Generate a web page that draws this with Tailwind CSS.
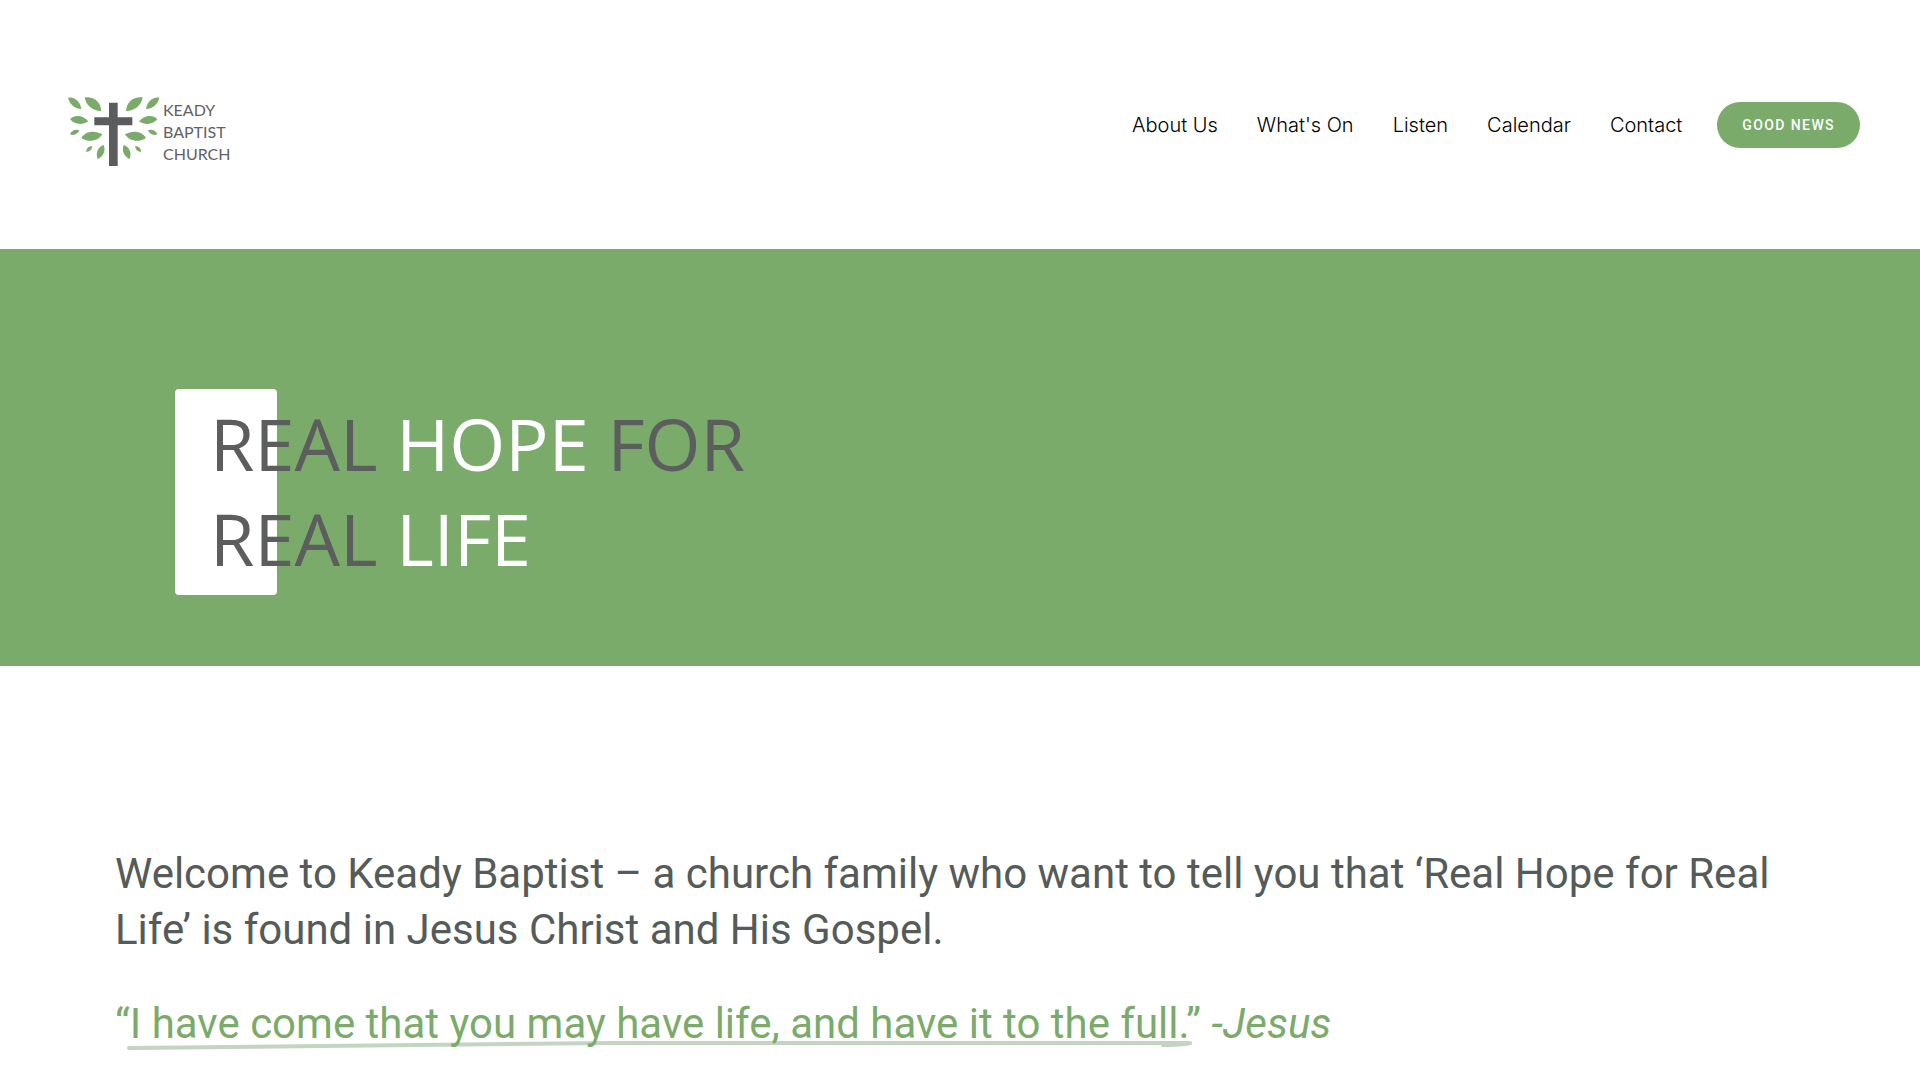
<!DOCTYPE html>
<html lang="en">
<head>
<meta charset="utf-8">
<meta name="viewport" content="width=device-width, initial-scale=1">
<title>Keady Baptist Church</title>
<script src="https://cdn.jsdelivr.net/npm/@tailwindcss/browser@4"></script>
</head>
<body class="bg-white">
<header class="flex min-h-[249px] items-center justify-between pl-[66px] pr-[60px]">
  <a href="#" class="flex items-center gap-px pt-3.5" aria-label="Keady Baptist Church">
    <svg class="h-[72px] w-24" viewBox="48 48 288 216" aria-hidden="true">
      <defs>
        <g id="leaves" fill="#7aab6b">
          <path d="M54 53C72 50 90 62 94 87C76 86 60 76 54 53Z"/>
          <path d="M104 52C132 49 152 64 154 94C128 92 108 78 104 52Z"/>
          <path d="M60 118C74 103 98 105 115 124C96 136 74 134 60 118Z"/>
          <path d="M60 163C64 151 78 147 88 151C84 162 72 168 60 163Z"/>
          <path d="M94 174C106 153 134 150 157 163C144 185 114 188 94 174Z"/>
          <path d="M108 215C110 203 118 198 127 199C125 210 118 217 108 215Z"/>
          <path d="M143 237C136 218 144 200 161 195C168 212 160 230 143 237Z"/>
        </g>
      </defs>
      <use href="#leaves"/>
      <use href="#leaves" transform="translate(382 0) scale(-1 1)"/>
      <path fill="#5a5c5d" d="M177 68h26v44h44v24h-44v122h-26V136h-44v-24h44z"/>
    </svg>
    <span class="font-['Lato',sans-serif] text-base leading-[22px] text-[#5f6162]">KEADY<br>BAPTIST<br>CHURCH</span>
  </a>
  <div class="flex items-center gap-[35px]">
    <nav class="flex gap-[39px] font-['Inter',sans-serif] text-xl font-light leading-7 text-black">
      <a href="#">About Us</a>
      <a href="#">What's On</a>
      <a href="#">Listen</a>
      <a href="#">Calendar</a>
      <a href="#">Contact</a>
    </nav>
    <a href="#" class="rounded-full bg-[#7aab6b] px-[25px] py-[13px] font-['Roboto',sans-serif] text-sm font-medium leading-5 tracking-widest text-white">GOOD NEWS</a>
  </div>
</header>
<main>
  <section class="bg-[#7aab6b] pb-[71px] pl-[175px] pt-[140px]">
    <div class="relative pb-[9px] pl-[35px] pt-[7px]">
      <div class="absolute inset-y-0 left-0 w-[102px] rounded-sm bg-white"></div>
      <h1 class="relative font-['Open_Sans',sans-serif] text-7xl leading-[95px] text-[#5c5e5d]">REAL <span class="text-white">HOPE</span> FOR<br>REAL <span class="text-white">LIFE</span></h1>
    </div>
  </section>
  <section class="px-[115px] pb-7 pt-[180px] font-['Roboto',sans-serif] text-[42px] leading-[56px]">
    <p class="text-[#545b58]">Welcome to Keady Baptist – a church family who want to tell you that ‘Real Hope for Real Life’ is found in Jesus Christ and His Gospel.</p>
    <p class="mt-[38px] text-[#7aab6b]"><span class="relative inline-block"><svg class="absolute bottom-0 left-3 h-3 w-[calc(100%-20px)]" viewBox="0 0 1064 12" preserveAspectRatio="none" fill="none" stroke="#c5d3c3" aria-hidden="true"><path stroke-width="4" stroke-linecap="round" d="M2 8Q250 5 480 3L1061 3"/><path stroke-width="2" d="M1032 6Q1052 6 1062 4"/></svg><span class="relative">“I have come that you may have life, and have it to the full.”</span></span> <em>-Jesus</em></p>
  </section>
</main>
</body>
</html>
